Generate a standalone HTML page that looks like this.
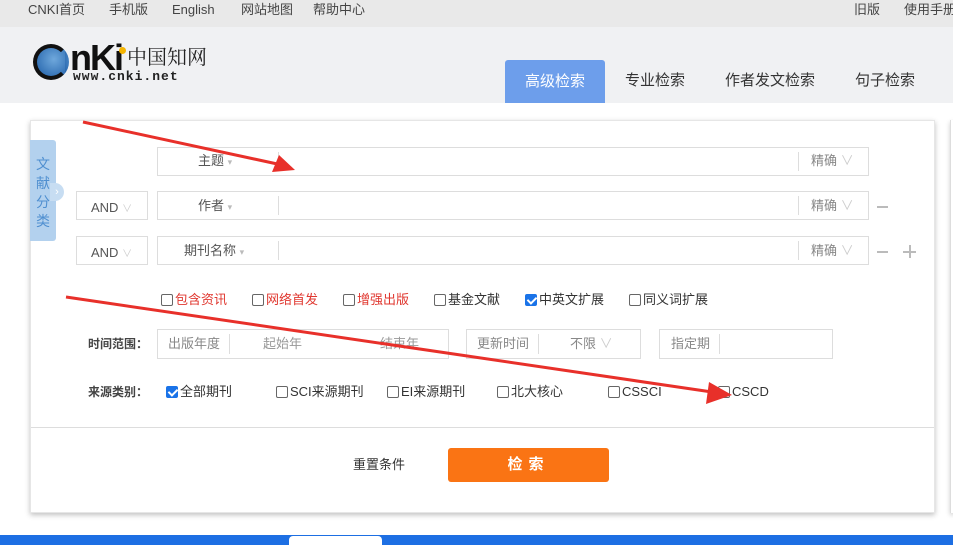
<!DOCTYPE html>
<html><head><meta charset="utf-8"><style>
*{margin:0;padding:0;box-sizing:border-box}
body{width:953px;height:545px;overflow:hidden;background:#fff;font-family:"Liberation Sans","Noto Sans CJK SC",sans-serif;font-size:13px;color:#333;position:relative}
.a{position:absolute;white-space:nowrap;line-height:18px}
.box{position:absolute;border:1px solid #ddd;background:#fff}
.cb{display:inline-block;width:12px;height:12px;border:1px solid #666;border-radius:2px;vertical-align:-2px;margin-right:2px;background:#fff}
.cb.on{background:#1a73e8;border-color:#1a73e8;position:relative}
.cb.on:after{content:"";position:absolute;left:3px;top:0px;width:4px;height:7px;border:solid #fff;border-width:0 2px 2px 0;transform:rotate(45deg)}
.red{color:#e0372f}
.g{color:#888}
</style></head><body>
<div class="a" style="left:0;top:0;width:953px;height:27px;background:#e9e9e9"></div>
<div class="a" style="left:28px;top:1px;color:#444">CNKI首页</div>
<div class="a" style="left:109px;top:1px;color:#444">手机版</div>
<div class="a" style="left:172px;top:1px;color:#444">English</div>
<div class="a" style="left:241px;top:1px;color:#444">网站地图</div>
<div class="a" style="left:313px;top:1px;color:#444">帮助中心</div>
<div class="a" style="left:854px;top:1px;color:#444">旧版</div>
<div class="a" style="left:904px;top:1px;color:#444">使用手册</div>
<div class="a" style="left:0;top:27px;width:953px;height:76px;background:#f0f1f3"></div>
<!-- logo -->
<div class="a" style="left:33px;top:44px;width:36px;height:36px;border-radius:50%;background:radial-gradient(circle at 60% 40%,#6fa8dc,#1f5fa8);border:4px solid #111;border-right-color:transparent"></div>
<div class="a" style="left:70px;top:38px;font:bold 36px 'Liberation Sans',sans-serif;line-height:40px;color:#111;letter-spacing:-2px">nKi</div>
<div class="a" style="left:119px;top:47px;width:7px;height:7px;border-radius:50%;background:#f4b400"></div>
<div class="a" style="left:127px;top:44px;font:20px 'Noto Serif CJK SC',serif;line-height:24px;color:#222">中国知网</div>
<div class="a" style="left:73px;top:69px;font:bold 13px 'Liberation Mono',monospace;color:#222;letter-spacing:1px">www.cnki.net</div>
<!-- tabs -->
<div class="a" style="left:505px;top:60px;width:100px;height:43px;background:#6d9eeb;border-radius:3px 3px 0 0;color:#fff;font-size:15px;text-align:center;line-height:43px">高级检索</div>
<div class="a" style="left:625px;top:72px;font-size:15px;color:#333">专业检索</div>
<div class="a" style="left:725px;top:72px;font-size:15px;color:#333">作者发文检索</div>
<div class="a" style="left:855px;top:72px;font-size:15px;color:#333">句子检索</div>
<!-- panel -->
<div class="a" style="left:30px;top:120px;width:905px;height:393px;background:#fff;border:1px solid #e6e6e6;box-shadow:0 2px 5px rgba(0,0,0,.25)"></div>
<div class="a" style="left:950px;top:120px;width:5px;height:393px;border-left:1px solid #ddd;box-shadow:0 2px 5px rgba(0,0,0,.2)"></div>
<div class="a" style="left:30px;top:140px;width:26px;height:101px;background:#b3d1ee;border-radius:0 3px 3px 0;color:#4f8fd0;font-size:14px;line-height:19px;text-align:center;padding-top:15px;white-space:normal">文<br>献<br>分<br>类</div>
<div class="a" style="left:50px;top:183px;width:14px;height:18px;border-radius:0 9px 9px 0;background:#c7ddf2;color:#fff;font-size:11px;line-height:18px;text-align:center">›</div>
<!-- row1 -->
<div class="box" style="left:157px;top:147px;width:712px;height:29px"></div>
<div class="a" style="left:198px;top:152px;color:#555">主题 <span style="color:#bbb;font-size:9px">▾</span></div>
<div class="a" style="left:278px;top:152px;width:1px;height:19px;background:#ddd"></div>
<div class="a" style="left:798px;top:152px;width:1px;height:19px;background:#ddd"></div>
<div class="a g" style="left:811px;top:152px">精确 <span style="color:#ccc">∨</span></div>
<!-- row2 -->
<div class="box" style="left:76px;top:191px;width:72px;height:29px"></div>
<div class="a" style="left:91px;top:199px;color:#555">AND <span style="color:#ccc;font-size:10px">∨</span></div>
<div class="box" style="left:157px;top:191px;width:712px;height:29px"></div>
<div class="a" style="left:198px;top:197px;color:#555">作者 <span style="color:#bbb;font-size:9px">▾</span></div>
<div class="a" style="left:278px;top:196px;width:1px;height:19px;background:#ddd"></div>
<div class="a" style="left:798px;top:196px;width:1px;height:19px;background:#ddd"></div>
<div class="a g" style="left:811px;top:197px">精确 <span style="color:#ccc">∨</span></div>
<div class="a" style="left:877px;top:206px;width:11px;height:2px;background:#bbb"></div>
<!-- row3 -->
<div class="box" style="left:76px;top:236px;width:72px;height:29px"></div>
<div class="a" style="left:91px;top:244px;color:#555">AND <span style="color:#ccc;font-size:10px">∨</span></div>
<div class="box" style="left:157px;top:236px;width:712px;height:29px"></div>
<div class="a" style="left:184px;top:242px;color:#555">期刊名称 <span style="color:#bbb;font-size:9px">▾</span></div>
<div class="a" style="left:278px;top:241px;width:1px;height:19px;background:#ddd"></div>
<div class="a" style="left:798px;top:241px;width:1px;height:19px;background:#ddd"></div>
<div class="a g" style="left:811px;top:242px">精确 <span style="color:#ccc">∨</span></div>
<div class="a" style="left:877px;top:251px;width:11px;height:2px;background:#bbb"></div>
<div class="a" style="left:903px;top:251px;width:13px;height:2px;background:#bbb"></div>
<div class="a" style="left:909px;top:245px;width:2px;height:13px;background:#bbb"></div>
<!-- checkboxes -->
<div class="a red" style="left:161px;top:291px"><span class="cb"></span>包含资讯</div>
<div class="a red" style="left:252px;top:291px"><span class="cb"></span>网络首发</div>
<div class="a red" style="left:343px;top:291px"><span class="cb"></span>增强出版</div>
<div class="a" style="left:434px;top:291px"><span class="cb"></span>基金文献</div>
<div class="a" style="left:525px;top:291px"><span class="cb on"></span>中英文扩展</div>
<div class="a" style="left:629px;top:291px"><span class="cb"></span>同义词扩展</div>
<!-- time -->
<div class="a" style="left:88px;top:335px;font-weight:bold;color:#444;font-size:12px">时间范围：</div>
<div class="box" style="left:157px;top:329px;width:292px;height:30px"></div>
<div class="a g" style="left:168px;top:335px">出版年度</div>
<div class="a" style="left:229px;top:334px;width:1px;height:20px;background:#ddd"></div>
<div class="a" style="left:263px;top:335px;color:#999">起始年</div>
<div class="a" style="left:380px;top:335px;color:#999">结束年</div>
<div class="box" style="left:466px;top:329px;width:175px;height:30px"></div>
<div class="a g" style="left:477px;top:335px">更新时间</div>
<div class="a" style="left:538px;top:334px;width:1px;height:20px;background:#ddd"></div>
<div class="a g" style="left:570px;top:335px">不限 <span style="color:#ccc">∨</span></div>
<div class="box" style="left:659px;top:329px;width:174px;height:30px"></div>
<div class="a g" style="left:671px;top:335px">指定期</div>
<div class="a" style="left:719px;top:334px;width:1px;height:20px;background:#ddd"></div>
<!-- source -->
<div class="a" style="left:88px;top:383px;font-weight:bold;color:#444;font-size:12px">来源类别：</div>
<div class="a" style="left:166px;top:383px"><span class="cb on"></span>全部期刊</div>
<div class="a" style="left:276px;top:383px"><span class="cb"></span>SCI来源期刊</div>
<div class="a" style="left:387px;top:383px"><span class="cb"></span>EI来源期刊</div>
<div class="a" style="left:497px;top:383px"><span class="cb"></span>北大核心</div>
<div class="a" style="left:608px;top:383px"><span class="cb"></span>CSSCI</div>
<div class="a" style="left:718px;top:383px"><span class="cb"></span>CSCD</div>
<div class="a" style="left:31px;top:427px;width:903px;height:1px;background:#ddd"></div>
<div class="a" style="left:353px;top:456px;color:#333">重置条件</div>
<div class="a" style="left:448px;top:448px;width:161px;height:34px;background:#fa7414;border-radius:3px;color:#fff;font-weight:bold;font-size:15px;text-align:center;line-height:34px;letter-spacing:6px">检索</div>
<!-- bottom -->
<div class="a" style="left:0;top:535px;width:953px;height:10px;background:#1d6fe3"></div>
<div class="a" style="left:289px;top:536px;width:93px;height:9px;background:#fff;border-radius:4px 4px 0 0"></div>
<!-- arrows -->
<svg class="a" style="left:0;top:0" width="953" height="545">
<line x1="83" y1="122" x2="282" y2="165" stroke="#e8302a" stroke-width="3"/>
<polygon points="295,170 272,172 279,155" fill="#e8302a"/>
<line x1="66" y1="297" x2="712" y2="392" stroke="#e8302a" stroke-width="3"/>
<polygon points="732,395 706,404 709,382" fill="#e8302a"/>
</svg>
</body></html>
